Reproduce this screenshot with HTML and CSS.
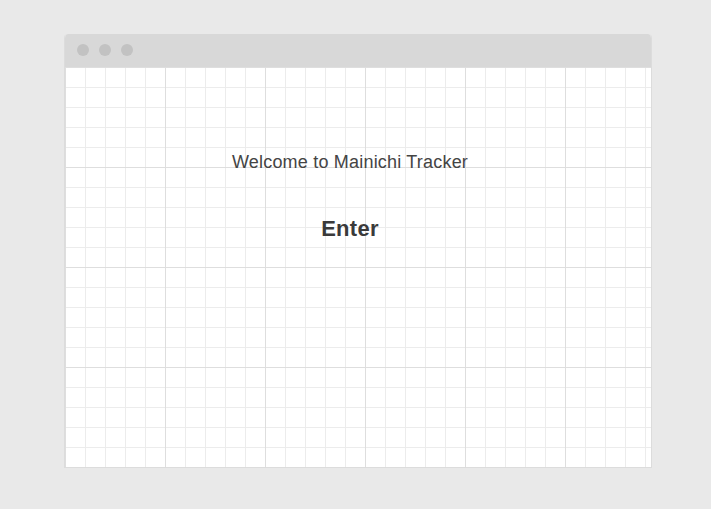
FILE: index.html
```html
<!DOCTYPE html>
<html>
<head>
<meta charset="utf-8">
<link rel="stylesheet" href="styles.css">
</head>
<body>
<div class="window">
  <div class="titlebar">
    <span class="dot"></span><span class="dot"></span><span class="dot"></span>
  </div>
  <div class="content">
    <p class="welcome">Welcome to Mainichi Tracker</p>
    <p class="enter">Enter</p>
  </div>
</div>
</body>
</html>
```
FILE: styles.css
```css
html, body { margin: 0; padding: 0; }
body {
  background: #e9e9e9;
  font-family: "Liberation Sans", Arial, sans-serif;
  width: 711px;
  height: 509px;
  padding-top: 34px;
  box-sizing: border-box;
}
.window {
  margin-left: 64px;
  width: 588px;
  height: 434px;
  box-sizing: border-box;
  border: 1px solid #dcdcdc;
  border-top: none;
  border-radius: 4px 4px 0 0;
  background: #fff;
  display: flex;
  flex-direction: column;
  overflow: hidden;
}
.titlebar {
  height: 33px;
  background: #d8d8d8;
  display: flex;
  align-items: center;
  gap: 10px;
  padding-left: 12px;
  padding-bottom: 1px;
  box-sizing: border-box;
  flex: none;
}
.dot {
  width: 12px;
  height: 12px;
  border-radius: 50%;
  background: #c2c2c2;
}
.content {
  flex: 1;
  display: flex;
  flex-direction: column;
  align-items: center;
  padding-right: 16px;
  background-color: #fff;
  background-image:
    linear-gradient(to right, #dedede 1px, transparent 1px),
    linear-gradient(to bottom, #dedede 1px, transparent 1px),
    linear-gradient(to right, #ececec 1px, transparent 1px),
    linear-gradient(to bottom, #ececec 1px, transparent 1px);
  background-size: 100px 100px, 100px 100px, 20px 20px, 20px 20px;
  background-position: 0 0;
}
.welcome {
  margin: 83px 0 0;
  font-size: 18px;
  color: #444;
  line-height: 24px;
  letter-spacing: 0.2px;
}
.enter {
  margin: 42px 0 0;
  font-size: 22px;
  font-weight: bold;
  color: #3a3a3a;
  line-height: 26px;
  letter-spacing: 0.3px;
}
```
